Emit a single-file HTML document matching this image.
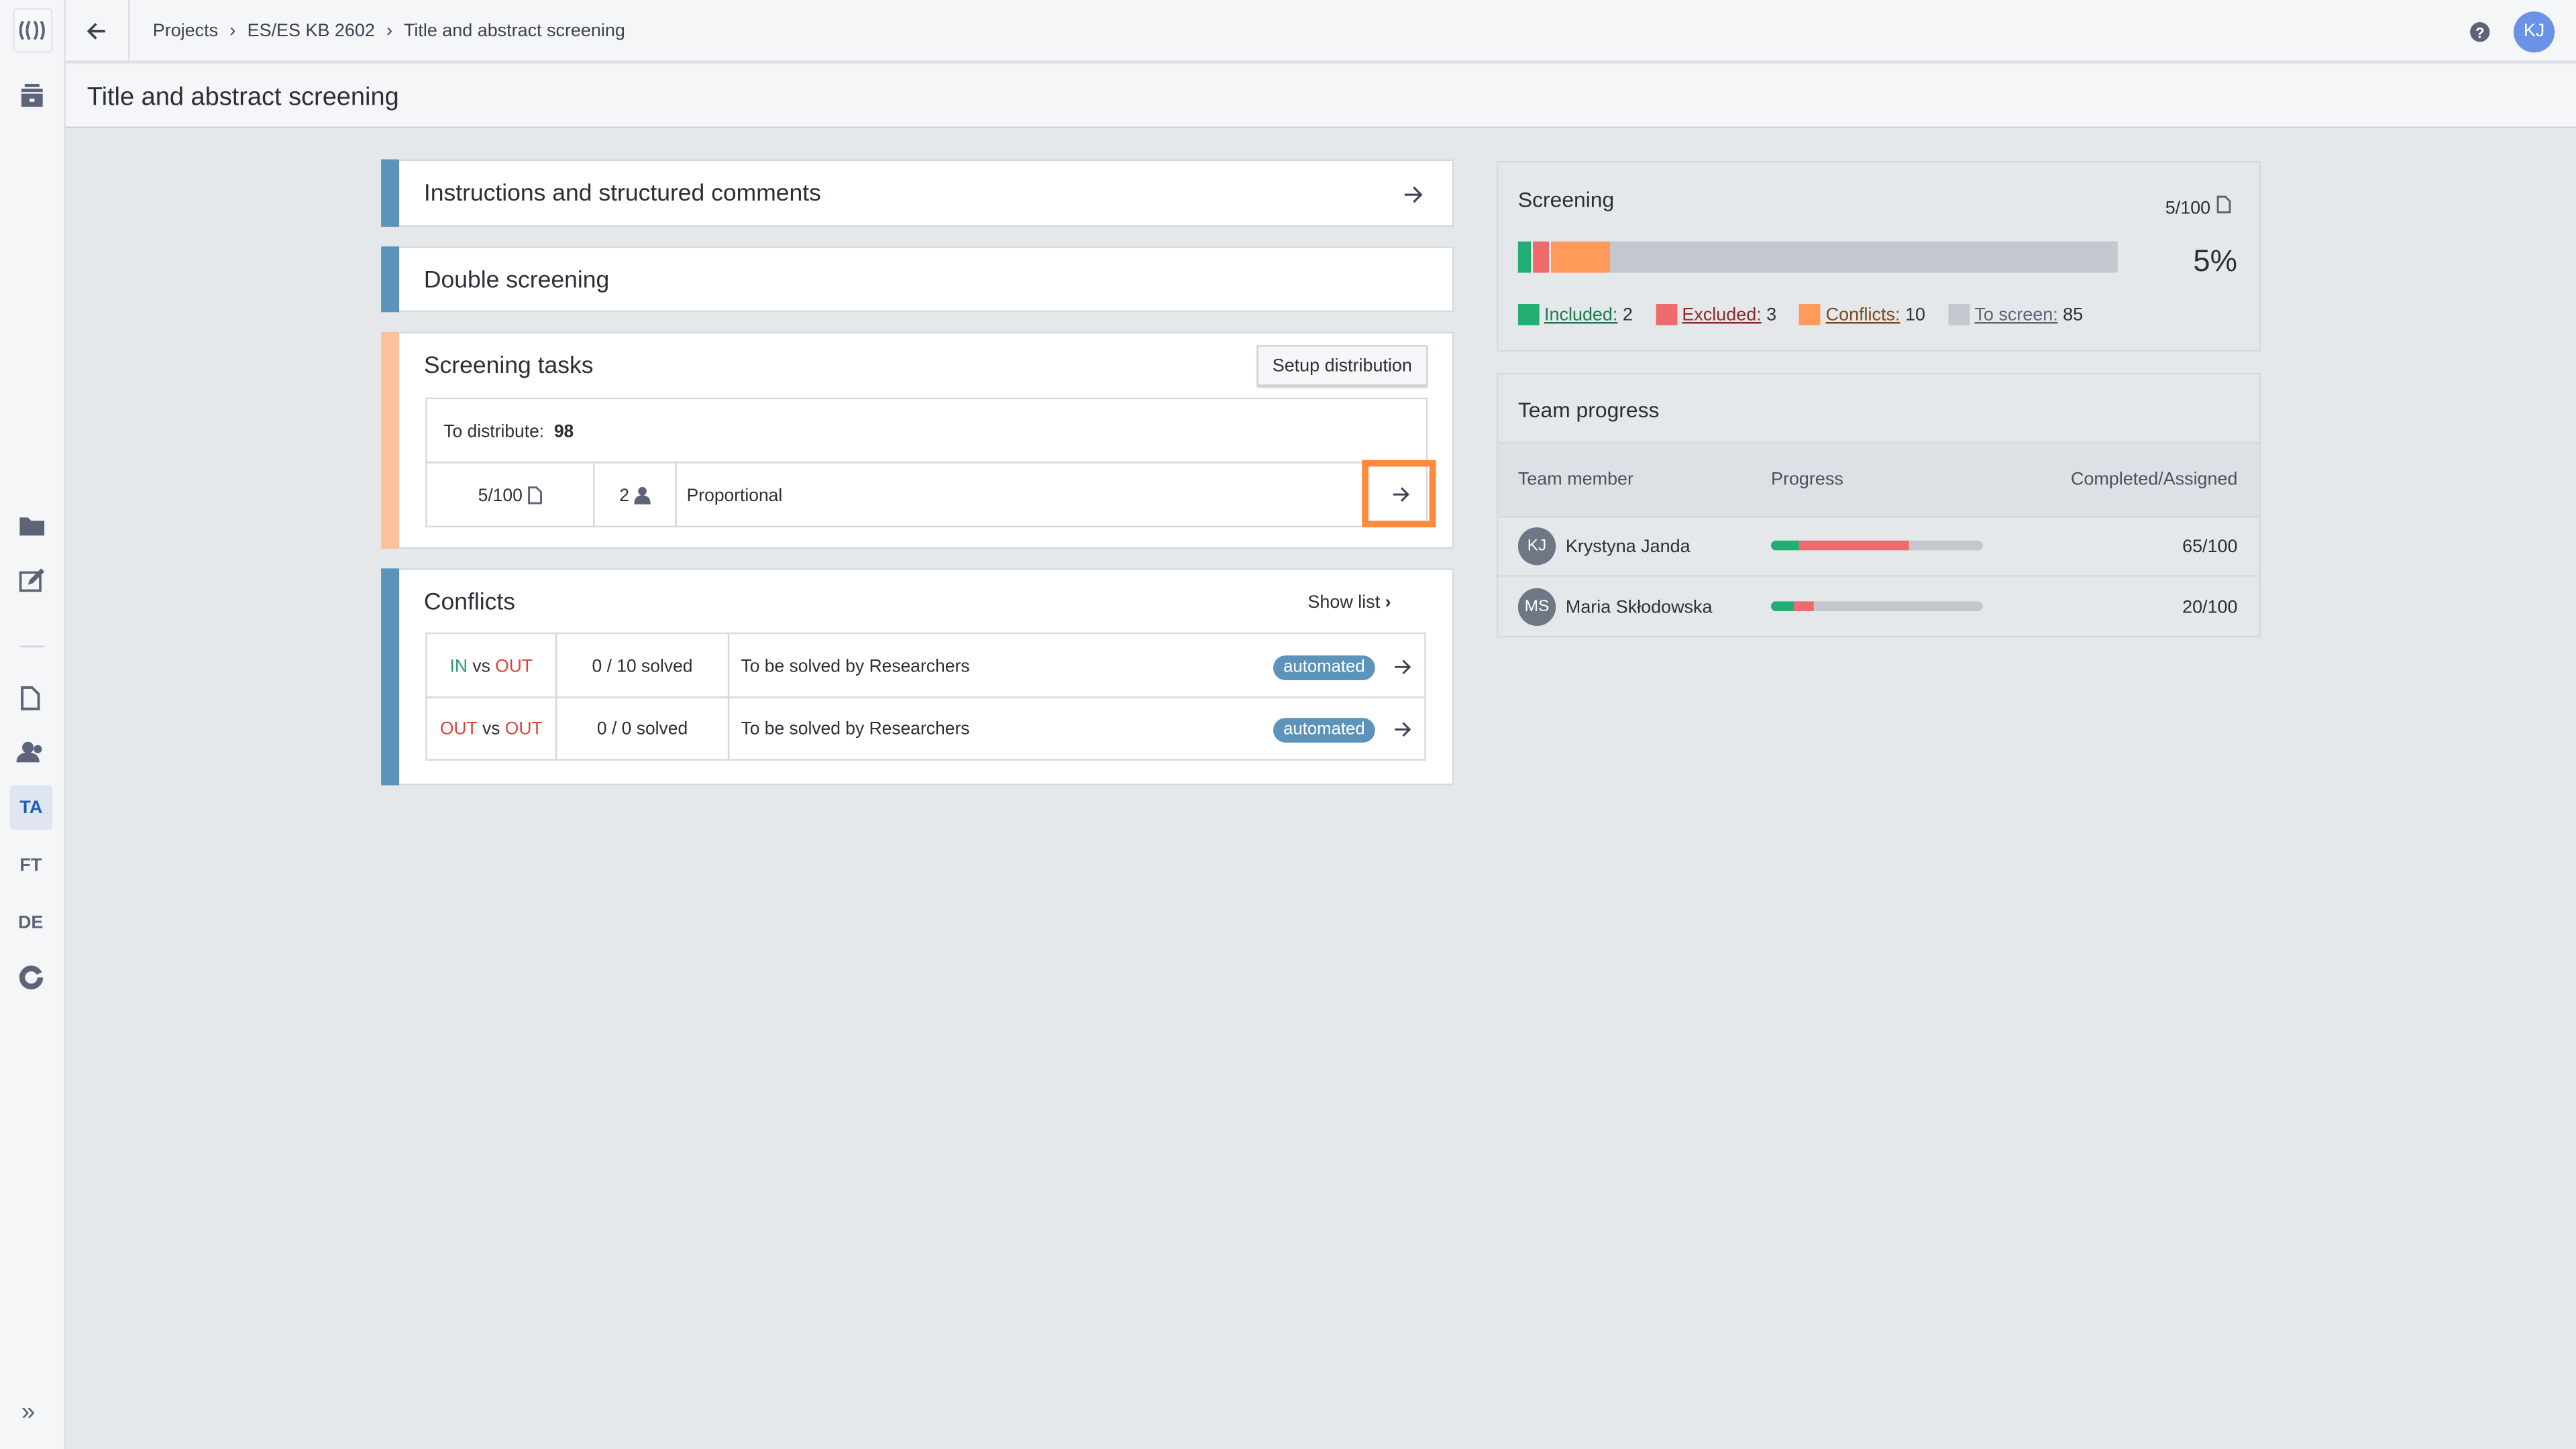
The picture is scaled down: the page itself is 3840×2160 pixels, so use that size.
<!DOCTYPE html>
<html><head><meta charset="utf-8">
<style>
*{box-sizing:border-box;margin:0;padding:0}
html,body{width:3840px;height:2160px;overflow:hidden;background:#e5e8eb}
#w{position:absolute;left:0;top:0;width:1568px;height:882px;transform:scale(2.44898);transform-origin:0 0;font-family:"Liberation Sans",sans-serif;color:#2b2f36;font-size:10.8px;background:#e5e8eb}
.a{position:absolute}
.card{position:absolute;background:#fff;border:1px solid #d5d9de}
.stripe{position:absolute;left:-1px;top:-1px;bottom:-1px;width:11px}
.t15{font-size:14.5px;color:#2b2f36}
.cell{position:absolute;border:1px solid #d5d9de;display:flex;align-items:center;padding-top:1px}
.ic{fill:#5b6577}
</style></head><body><div id="w">
<!-- sidebar -->
<div class="a" style="left:0;top:0;width:40px;height:882px;background:#f5f6f8;border-right:1px solid #dcdfe3"></div>
<div class="a" style="left:8px;top:5px;width:24px;height:27px;border:1px solid #e3e6ea;border-radius:2px;background:#f7f8fa"></div>
<svg class="a" style="left:11px;top:12px" width="17" height="13"><path d="M3 1C1 4 1 9 3 12M7 1C5 4 5 9 7 12M10 1C12 4 12 9 10 12M14 1C16 4 16 9 14 12" stroke="#5b6577" stroke-width="1.6" fill="none"/></svg>
<div class="a" style="left:40px;top:0;width:1528px;height:38px;background:#f5f6f8;border-bottom:1px solid #d8dbe0"></div>
<div class="a" style="left:78px;top:0;width:1px;height:38px;background:#dcdfe3"></div>
<svg class="a" style="left:52px;top:12px" width="14" height="14" viewBox="0 0 14 14"><path d="M12 7H2M6.5 2.5L2 7l4.5 4.5" stroke="#3b4250" stroke-width="1.5" fill="none"/></svg>
<div class="a" style="left:93px;top:13px;font-size:11px;color:#3b4250">Projects <span style="margin:0 4px">›</span> ES/ES KB 2602 <span style="margin:0 4px">›</span> Title and abstract screening</div>
<svg class="a" style="left:1503px;top:13px" width="13" height="13"><circle cx="6.5" cy="6.5" r="6" fill="#5b6577"/><text x="6.5" y="10" font-size="9" font-weight="bold" fill="#fff" text-anchor="middle" font-family="Liberation Sans">?</text></svg>
<div class="a" style="left:1530px;top:7px;width:25px;height:25px;border-radius:50%;background:#6a93e8;color:#fff;font-size:11px;text-align:center;line-height:25px">KJ</div>
<!-- page header -->
<div class="a" style="left:40px;top:39px;width:1528px;height:39px;background:#f5f6f8;border-bottom:1px solid #cfd3d8"></div>
<div class="a" style="left:53px;top:51px;font-size:15.5px;color:#2b2f36">Title and abstract screening</div>
<svg class="a" style="left:12px;top:51px" width="15" height="15"><rect x="3" y="0" width="9" height="2" class="ic"/><rect x="1" y="3" width="13" height="2" class="ic"/><rect x="1" y="6" width="13" height="8" class="ic"/><rect x="6" y="9" width="3" height="2" fill="#f5f6f8"/></svg>
<!-- sidebar icons -->
<svg class="a" style="left:11px;top:313px" width="17" height="15"><path d="M1 2h5l2 2h8v9H1z" class="ic"/></svg>
<svg class="a" style="left:11px;top:345px" width="17" height="16"><rect x="1.5" y="3.5" width="12" height="11" fill="none" stroke="#5b6577" stroke-width="1.5"/><path d="M6 11l1-3 7-7 2 2-7 7z" class="ic"/></svg>
<div class="a" style="left:12px;top:393px;width:15px;height:1px;background:#cfd3d8"></div>
<svg class="a" style="left:12px;top:417px" width="14" height="16"><path d="M1.5 1.5h6l4 4v9h-10z" fill="none" stroke="#5b6577" stroke-width="1.6"/></svg>
<svg class="a" style="left:10px;top:450px" width="18" height="15"><circle cx="7" cy="5" r="3.5" class="ic"/><path d="M0 14c0-4 3-6 7-6s7 2 7 6z" class="ic"/><circle cx="13" cy="6" r="2.5" class="ic"/></svg>
<div class="a" style="left:6px;top:478px;width:26px;height:27px;background:#dfe5f1;border-radius:2px"></div>
<div class="a" style="left:12px;top:486px;font-size:11px;font-weight:bold;color:#1f5fb4">TA</div>
<div class="a" style="left:12px;top:521px;font-size:11px;font-weight:bold;color:#5b6577">FT</div>
<div class="a" style="left:11px;top:556px;font-size:11px;font-weight:bold;color:#5b6577">DE</div>
<svg class="a" style="left:11px;top:587px" width="16" height="16"><circle cx="8" cy="8" r="5.5" fill="none" stroke="#5b6577" stroke-width="3.5"/><path d="M8 8L16 4V8z" fill="#f5f6f8"/></svg>
<div class="a" style="left:13px;top:851px;font-size:15px;color:#5b6577">»</div>

<!-- card 1 -->
<div class="card" style="left:232px;top:97px;width:653px;height:41px"><div class="stripe" style="background:#5b93bb"></div>
<div class="a t15" style="left:25px;top:12px">Instructions and structured comments</div>
<svg class="a" style="left:621px;top:14px" width="13" height="13"><path d="M1 6.5h10M6.5 2l4.5 4.5L6.5 11" stroke="#3b4250" stroke-width="1.3" fill="none"/></svg></div>
<!-- card 2 -->
<div class="card" style="left:232px;top:150px;width:653px;height:40px"><div class="stripe" style="background:#5b93bb"></div>
<div class="a t15" style="left:25px;top:12px">Double screening</div></div>
<!-- card 3 -->
<div class="card" style="left:232px;top:202px;width:653px;height:132px"><div class="stripe" style="background:#fdc09a"></div>
<div class="a t15" style="left:25px;top:12px">Screening tasks</div>
<div class="a" style="left:532px;top:7px;width:104px;height:25px;border:1px solid #cfd3d8;background:#f6f7f9;font-size:11px;text-align:center;line-height:24px;box-shadow:0 1px 1px #ccc">Setup distribution</div>
<div class="cell" style="left:26px;top:39px;width:610px;height:40px;padding-left:10px">To distribute:&nbsp;&nbsp;<b>98</b></div>
<div class="cell" style="left:26px;top:78px;width:103px;height:40px;justify-content:center">5/100&nbsp;<svg width="9" height="11"><path d="M1 .7h4.5l2.8 2.8v6.8H1z" fill="none" stroke="#5b6577" stroke-width="1.2"/></svg></div>
<div class="cell" style="left:128px;top:78px;width:51px;height:40px;justify-content:center">2&nbsp;<svg width="10" height="11"><circle cx="5" cy="3" r="2.6" class="ic"/><path d="M0 11c0-4 2-5.5 5-5.5s5 1.5 5 5.5z" class="ic"/></svg></div>
<div class="cell" style="left:178px;top:78px;width:458px;height:40px;padding-left:6px">Proportional</div>
<div class="a" style="left:596px;top:77px;width:45px;height:41px;border:4px solid #ff8a3d"></div>
<svg class="a" style="left:614px;top:92px" width="12" height="12"><path d="M1 6h9M6 2l4 4-4 4" stroke="#3b4250" stroke-width="1.2" fill="none"/></svg>
</div>
<!-- card 4 -->
<div class="card" style="left:232px;top:346px;width:653px;height:132px"><div class="stripe" style="background:#5b93bb"></div>
<div class="a t15" style="left:25px;top:12px">Conflicts</div>
<div class="a" style="left:563px;top:14px;font-size:11px">Show list <b>›</b></div>
<div class="cell" style="left:26px;top:38px;width:80px;height:40px;justify-content:center"><span style="color:#2a9a67">IN</span>&nbsp;vs&nbsp;<span style="color:#d9443c">OUT</span></div>
<div class="cell" style="left:105px;top:38px;width:106px;height:40px;justify-content:center">0 / 10 solved</div>
<div class="cell" style="left:210px;top:38px;width:425px;height:40px;padding-left:7px">To be solved by Researchers</div>
<div class="cell" style="left:26px;top:77px;width:80px;height:39px;justify-content:center"><span style="color:#d9443c">OUT</span>&nbsp;vs&nbsp;<span style="color:#d9443c">OUT</span></div>
<div class="cell" style="left:105px;top:77px;width:106px;height:39px;justify-content:center">0 / 0 solved</div>
<div class="cell" style="left:210px;top:77px;width:425px;height:39px;padding-left:7px">To be solved by Researchers</div>
<div class="a" style="left:542px;top:52px;width:62px;height:15px;border-radius:8px;background:#5b93bb;color:#fff;font-size:10.5px;text-align:center;line-height:15px">automated</div>
<div class="a" style="left:542px;top:90px;width:62px;height:15px;border-radius:8px;background:#5b93bb;color:#fff;font-size:10.5px;text-align:center;line-height:15px">automated</div>
<svg class="a" style="left:615px;top:53px" width="12" height="12"><path d="M1 6h9M6 2l4 4-4 4" stroke="#3b4250" stroke-width="1.2" fill="none"/></svg>
<svg class="a" style="left:615px;top:91px" width="12" height="12"><path d="M1 6h9M6 2l4 4-4 4" stroke="#3b4250" stroke-width="1.2" fill="none"/></svg>
</div>

<!-- screening panel -->
<div class="a" style="left:911px;top:98px;width:465px;height:116px;border:1px solid #d5d9de"></div>
<div class="a" style="left:924px;top:114px;font-size:13px">Screening</div>
<div class="a" style="left:1318px;top:119px;font-size:11px">5/100 <svg width="9" height="11"><path d="M1 .7h4.5l2.8 2.8v6.8H1z" fill="none" stroke="#5b6577" stroke-width="1.2"/></svg></div>
<div class="a" style="left:924px;top:147px;width:365px;height:19px;background:#c3c8cf"></div>
<div class="a" style="left:924px;top:147px;width:8px;height:19px;background:#22ad72"></div>
<div class="a" style="left:932px;top:147px;width:11px;height:19px;background:#ef6b6b;border-left:1px solid #fff"></div>
<div class="a" style="left:943px;top:147px;width:37px;height:19px;background:#ff9a5a;border-left:1px solid #fff"></div>
<div class="a" style="left:1335px;top:148px;font-size:18.5px">5%</div>
<div class="a" style="left:924px;top:185px;font-size:11px;display:flex;align-items:center">
<span style="width:13px;height:13px;background:#22ad72;margin-right:3px"></span><u style="color:#1d7a4e">Included:</u>&nbsp;2
<span style="width:13px;height:13px;background:#ef6b6b;margin:0 3px 0 14px"></span><u style="color:#8a2a2a">Excluded:</u>&nbsp;3
<span style="width:13px;height:13px;background:#ff9a5a;margin:0 3px 0 14px"></span><u style="color:#7a4a1a">Conflicts:</u>&nbsp;10
<span style="width:13px;height:13px;background:#c3c8cf;margin:0 3px 0 14px"></span><u style="color:#5b6577">To screen:</u>&nbsp;85</div>
<!-- team progress -->
<div class="a" style="left:911px;top:227px;width:465px;height:161px;border:1px solid #d5d9de"></div>
<div class="a" style="left:924px;top:242px;font-size:13px">Team progress</div>
<div class="a" style="left:912px;top:269px;width:463px;height:46px;background:#dde0e4;border-top:1px solid #d5d9de;border-bottom:1px solid #d5d9de"></div>
<div class="a" style="left:924px;top:286px;font-size:11px;color:#4a5160">Team member</div>
<div class="a" style="left:1078px;top:286px;font-size:11px;color:#4a5160">Progress</div>
<div class="a" style="left:1256px;top:286px;font-size:11px;color:#4a5160;width:106px;text-align:right">Completed/Assigned</div>
<div class="a" style="left:912px;top:350px;width:463px;height:1px;background:#d5d9de"></div>
<div class="a" style="left:924px;top:321px;width:23px;height:23px;border-radius:50%;background:#6f7787;color:#fff;font-size:10px;text-align:center;line-height:23px">KJ</div>
<div class="a" style="left:953px;top:327px;font-size:11px">Krystyna Janda</div>
<div class="a" style="left:1078px;top:329px;width:129px;height:6px;border-radius:3px;background:#c3c8cf;overflow:hidden"><div style="position:absolute;left:0;width:17px;height:6px;background:#22ad72"></div><div style="position:absolute;left:17px;width:67px;height:6px;background:#ef6b6b"></div></div>
<div class="a" style="left:1300px;top:327px;font-size:11px;width:62px;text-align:right">65/100</div>
<div class="a" style="left:924px;top:358px;width:23px;height:23px;border-radius:50%;background:#6f7787;color:#fff;font-size:10px;text-align:center;line-height:23px">MS</div>
<div class="a" style="left:953px;top:364px;font-size:11px">Maria Skłodowska</div>
<div class="a" style="left:1078px;top:366px;width:129px;height:6px;border-radius:3px;background:#c3c8cf;overflow:hidden"><div style="position:absolute;left:0;width:14px;height:6px;background:#22ad72"></div><div style="position:absolute;left:14px;width:12px;height:6px;background:#ef6b6b"></div></div>
<div class="a" style="left:1300px;top:364px;font-size:11px;width:62px;text-align:right">20/100</div>
</div></body></html>
